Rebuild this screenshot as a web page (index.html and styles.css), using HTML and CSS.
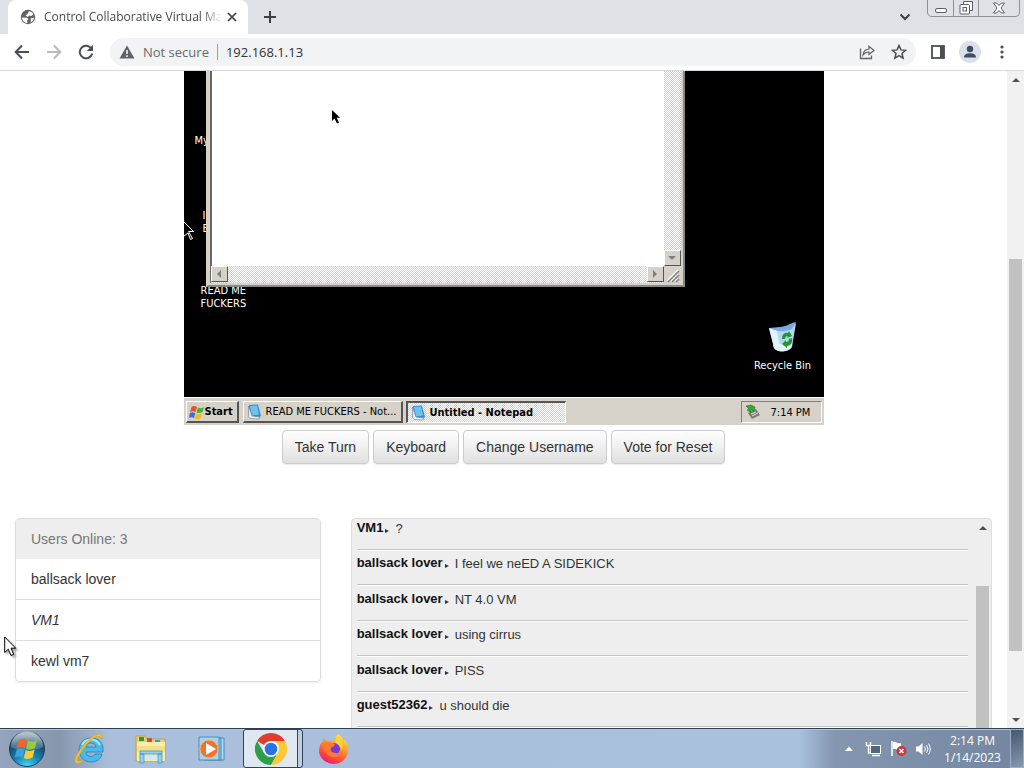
FILE: index.html
```html
<!DOCTYPE html>
<html lang="en">
<head>
    <meta charset="UTF-8">
    <meta name="viewport" content="width=device-width, initial-scale=1.0">
    <title>Control Collaborative Virtual Machines</title>
    <link rel="stylesheet" href="styles.css">
</head>
<body>
    <!-- Browser chrome -->
    <header class="tab-strip">
        <div class="tab">
            <svg class="favicon" width="16" height="16" viewBox="0 0 16 16">
                <circle cx="8" cy="8" r="7.2" fill="#5f6368"/>
                <path d="M2 8.500L7 8.800 8.500 10.500 7 11.500 7.500 14C4.500 14 2.200 11.500 2 8.500zM9 2.200c2 .3 3.500 1.300 4.400 2.800L11.500 7 9 6.500 8 8 5.500 6.500 7.500 5zM14 8.500c-.2 2.500-1.600 4.300-3.600 5L11 11l-.5-1.500z" fill="#fff"/>
            </svg>
            <span class="tab-title">Control Collaborative Virtual Mac</span>
            <button class="icon-btn tab-close" aria-label="Close tab">
                <svg width="10" height="10" viewBox="0 0 10 10"><path d="M1 1l8 8M9 1L1 9" stroke="#3c4043" stroke-width="1.7"/></svg>
            </button>
        </div>
        <button class="icon-btn new-tab" aria-label="New tab">
            <svg width="12" height="12" viewBox="0 0 12 12"><path d="M6 0v12M0 6h12" stroke="#3c4043" stroke-width="2"/></svg>
        </button>
        <button class="icon-btn tab-search" aria-label="Search tabs">
            <svg width="12" height="8" viewBox="0 0 12 8"><path d="M1.5 1.500L6 6l4.500-4.500" fill="none" stroke="#3c4043" stroke-width="2"/></svg>
        </button>
        <div class="window-controls">
            <button aria-label="Minimize"><svg width="14" height="14" viewBox="0 0 14 14"><rect x="1.500" y="7.500" width="11" height="4" rx="1.500" fill="#fff" stroke="#5b6168"/></svg></button>
            <button aria-label="Restore"><svg width="14" height="14" viewBox="0 0 14 14"><path d="M4.500 3.500v-3h9v9h-3" fill="#fff" stroke="#5b6168"/><rect x="1" y="3.500" width="9.500" height="9.500" rx="1" fill="#fff" stroke="#5b6168"/><rect x="4" y="6.500" width="3.500" height="3.500" fill="#fff" stroke="#5b6168"/></svg></button>
            <button class="close" aria-label="Close"><svg width="14" height="12" viewBox="0 0 14 12"><path d="M1.500 1h3.200L7 3.500 9.300 1h3.200L9 6l3.500 5H9.300L7 8.500 4.700 11H1.500L5 6z" fill="#fff" stroke="#5b6168"/></svg></button>
        </div>
    </header>

    <nav class="toolbar">
        <button class="icon-btn" aria-label="Back"><svg width="16" height="16" viewBox="0 0 16 16"><path d="M15 8H2M8 1.500L1.700 8 8 14.500" fill="none" stroke="#4a4d51" stroke-width="2"/></svg></button>
        <button class="icon-btn" aria-label="Forward"><svg width="16" height="16" viewBox="0 0 16 16"><path d="M1 8h13M8 1.500L14.300 8 8 14.500" fill="none" stroke="#b9bbbe" stroke-width="2"/></svg></button>
        <button class="icon-btn" aria-label="Reload"><svg width="16" height="16" viewBox="0 0 16 16"><path d="M13.300 4.500A6.300 6.300 0 1 0 14.200 9.500" fill="none" stroke="#4a4d51" stroke-width="2"/><path d="M15 .8V7H8.800z" fill="#4a4d51"/></svg></button>
        <div class="address">
            <svg width="16" height="14" viewBox="0 0 16 14"><path d="M8 .5L15.500 13.500H.5z" fill="#5f6368"/><path d="M8 5v4M8 10.200v1.800" stroke="#f1f3f4" stroke-width="1.6"/></svg>
            <label class="security" for="url">Not secure</label>
            <input id="url" class="url" type="text" value="192.168.1.13">
            <button class="icon-btn share" aria-label="Share"><svg width="16" height="16" viewBox="0 0 16 16"><path d="M1.500 4.500v10h11v-3" fill="none" stroke="#5f6368" stroke-width="1.3"/><path d="M4 11c.5-4 2.500-5.800 6-6V2.200L15 6.500 10 10.500V8C7.500 8 5.500 9 4 11z" fill="none" stroke="#5f6368" stroke-width="1.2"/></svg></button>
            <button class="icon-btn" aria-label="Bookmark"><svg width="16" height="16" viewBox="0 0 16 16"><path d="M8 1.500l1.900 4.400 4.700.4-3.600 3.100 1.100 4.700L8 11.600l-4.100 2.500L5 9.400 1.400 6.300l4.700-.4z" fill="none" stroke="#4a4d51" stroke-width="1.5"/></svg></button>
        </div>
        <button class="icon-btn" aria-label="Side panel"><svg width="16" height="14" viewBox="0 0 16 14"><rect x="2" y="1" width="12" height="12" fill="none" stroke="#4a4d51" stroke-width="1.8"/><path d="M10 1h4v12h-4z" fill="#4a4d51"/></svg></button>
        <button class="icon-btn profile" aria-label="Profile"><svg width="14" height="14" viewBox="0 0 14 14"><circle cx="7" cy="4" r="3.200" fill="#3f4d63"/><path d="M1 12.500c0-2.800 2.500-4.200 6-4.200s6 1.400 6 4.200z" fill="#3f4d63"/></svg></button>
        <button class="icon-btn" aria-label="Menu"><svg width="4" height="14" viewBox="0 0 4 14"><g fill="#4a4d51"><circle cx="2" cy="2" r="1.600"/><circle cx="2" cy="7" r="1.600"/><circle cx="2" cy="12" r="1.600"/></g></svg></button>
    </nav>

    <div class="viewport">
        <main class="page">
            <section class="vm">
                <div class="vm-desktop">
                    <span class="vm-label my">My</span>
                    <span class="vm-label internet">I<br>E</span>
                    <span class="vm-label readme">READ ME<br>FUCKERS</span>
                    <div class="notepad">
                        <textarea class="notepad-text" aria-label="Untitled - Notepad"></textarea>
                        <div class="xp-scroll vertical"><button aria-label="Scroll down"><i class="arrow down"></i></button></div>
                        <div class="xp-scroll horizontal">
                            <button aria-label="Scroll left"><i class="arrow left"></i></button>
                            <button aria-label="Scroll right"><i class="arrow right"></i></button>
                        </div>
                        <svg class="grip" width="17" height="17" viewBox="0 0 17 17"><path d="M3 15L14 4M7 15l7-7M11 15l3-3" stroke="#fff" stroke-width="1.5"/><path d="M4 16L15 5M8 16l7-7M12 16l3-3" stroke="#808080" stroke-width="1.5"/></svg>
                    </div>
                    <div class="recycle-bin">
                        <svg width="30" height="32" viewBox="0 0 30 32">
                            <path d="M1 7l13 2L28 2l-4 24c-3 5-14 6-18 1z" fill="#b3d8f5"/>
                            <path d="M1 7l11-1c6 0 10-4 16-5l-4 7c-7 3-16 3-23-1z" fill="#7ba9e0"/>
                            <path d="M1 7l8 3 3 17-6-1z" fill="#e2f3fd"/>
                            <path d="M5 24c6-3 10 1 19-1l-1 4c-4 4-14 5-17 0z" fill="#e4f8fb"/>
                            <path d="M14 18c0-5 3-7 6-6l1-2 3 5-5 2 1-2c-2 0-3 1-3 3z" fill="#23962b"/>
                            <path d="M24 17c1 5-2 8-5 8v2l-5-4 4-4v2c2 0 3-1 3-3z" fill="#23962b"/>
                        </svg>
                        <span class="vm-label">Recycle Bin</span>
                    </div>
                    <svg class="cursor-black" width="8" height="14" viewBox="0 0 8 14"><path d="M0 0v11l2.500-2.500L5 13.500l2-1-2.300-4.700H8z"/></svg>
                    <svg class="cursor-outline" width="12" height="20" viewBox="0 0 12 20"><path d="M-1 1l10.500 10.500h-5l4 7-2 1L4 13l-4 3" fill="#000" stroke="#fff"/></svg>
                </div>
                <div class="vm-taskbar">
                    <button class="xp-btn start">
                        <svg width="16" height="16" viewBox="0 0 16 16"><path d="M2.500 3C4.500 1.500 6 2 8 3L6.500 8C5 7 3.500 7 1 8z" fill="#e5532c"/><path d="M9 3.500c2 1 4 1 6-.5l-1.500 5c-2 1.300-4 1.300-6 .5z" fill="#58ab35"/><path d="M.8 9c2-1 3.500-1 5.500 0L5 14c-2-1-3.500-1-5 0z" fill="#3d70d6"/><path d="M7.200 9.500c2 1 4 .8 6-.3l-1.500 5c-2 1.300-4 1.300-6 .3z" fill="#f3be24"/></svg>
                        Start
                    </button>
                    <button class="xp-btn task">
                        <svg width="16" height="16" viewBox="0 0 16 16"><path d="M2 1l9-.5L14 12l-3 2-8-2z" fill="#3a8fd0"/><path d="M3 2l7-.5 2 9-7 1z" fill="#6dc3f0"/><path d="M1.500 2L5 12l8 1-1 2-9-.5-1.500-2z" fill="#e6edf2" stroke="#6f7c88" stroke-width=".6"/></svg>
                        <span>READ ME FUCKERS - Not...</span>
                    </button>
                    <button class="xp-btn task active">
                        <svg width="16" height="16" viewBox="0 0 16 16"><path d="M2 1l9-.5L14 12l-3 2-8-2z" fill="#3a8fd0"/><path d="M3 2l7-.5 2 9-7 1z" fill="#6dc3f0"/><path d="M1.500 2L5 12l8 1-1 2-9-.5-1.500-2z" fill="#e6edf2" stroke="#6f7c88" stroke-width=".6"/></svg>
                        <span>Untitled - Notepad</span>
                    </button>
                    <div class="vm-tray">
                        <svg width="16" height="16" viewBox="0 0 16 16"><path d="M3 9l8-4 4 6-8 4z" fill="#777b78"/><path d="M6 10l5-2M7 12l6-3" stroke="#e3e5e2"/><path d="M1 2l5-1 4 2-1 4-3-1v3L2 6l2-1z" fill="#36a532" stroke="#236d24" stroke-width=".5"/></svg>
                        <span>7:14 PM</span>
                    </div>
                </div>
            </section>

            <div class="actions">
                <button class="btn">Take Turn</button>
                <button class="btn">Keyboard</button>
                <button class="btn">Change Username</button>
                <button class="btn">Vote for Reset</button>
            </div>

            <div class="row">
                <div class="col">
                    <ul class="user-list">
                        <li class="heading">Users Online: 3</li>
                        <li>ballsack lover</li>
                        <li class="self">VM1</li>
                        <li>kewl vm7</li>
                    </ul>
                </div>
                <div class="col">
                    <div class="chat">
                        <div class="messages">
                            <p><b>VM1</b><i></i>?</p>
                            <p><b>ballsack lover</b><i></i>I feel we neED A SIDEKICK</p>
                            <p><b>ballsack lover</b><i></i>NT 4.0 VM</p>
                            <p><b>ballsack lover</b><i></i>using cirrus</p>
                            <p><b>ballsack lover</b><i></i>PISS</p>
                            <p><b>guest52362</b><i></i>u should die</p>
                        </div>
                        <div class="scrollbar chat-scroll">
                            <button aria-label="Scroll up"><i class="arrow up"></i></button>
                            <div class="thumb"></div>
                        </div>
                    </div>
                </div>
            </div>
        </main>
        <div class="scrollbar page-scroll">
            <button aria-label="Scroll up"><i class="arrow up"></i></button>
            <div class="track"><div class="thumb"></div></div>
            <button aria-label="Scroll down"><i class="arrow down"></i></button>
        </div>
    </div>

    <!-- Windows 7 taskbar -->
    <footer class="taskbar">
        <button class="orb" aria-label="Start">
            <svg width="38" height="38" viewBox="0 0 38 38">
                <defs>
                    <radialGradient id="orb" cx=".5" cy="1" r=".95"><stop offset="0" stop-color="#46dcf5"/><stop offset=".4" stop-color="#1683b5"/><stop offset=".75" stop-color="#194b70"/><stop offset="1" stop-color="#5f7b90"/></radialGradient>
                    <linearGradient id="gloss" x1="0" y1="0" x2="0" y2="1"><stop offset="0" stop-color="#fff" stop-opacity=".6"/><stop offset="1" stop-color="#fff" stop-opacity=".15"/></linearGradient>
                </defs>
                <circle cx="19" cy="19" r="17.500" fill="url(#orb)" stroke="#263f55"/>
                <path d="M3 17a16 16 0 0 1 32 0c-9 4-22 5-32 0z" fill="url(#gloss)"/>
                <path d="M11 10c3-2 5-1.500 8 0l-2 8c-3-1.500-5-1.500-8 0z" fill="#f0652a"/>
                <path d="M20 10.500c3 1.500 5.500 1.500 9-.5l-2 8c-3 1.800-6 1.800-9 .5z" fill="#9ac93b"/>
                <path d="M8.700 19.500c3-1.500 5-1.300 8 0l-2 8c-3-1.500-5-1.300-8 0z" fill="#38a3e0"/>
                <path d="M17.700 20c3 1.500 6 1.300 9-.5l-2 8c-3 1.800-6 1.800-9 .5z" fill="#fcc937"/>
            </svg>
        </button>
        <div class="apps">
            <button class="app" aria-label="Internet Explorer">
                <svg width="32" height="32" viewBox="0 0 32 32">
                    <path d="M17 5C9 5 5 11 5 17s5 12 12 12c6 0 10-3 11-8h-7c-1 2-2 2.500-4 2.500-3 0-5-2-5-4.500h17C30 10 25 5 17 5zm-5 9c.5-2.500 2.500-4 5-4s4.500 1.500 5 4z" fill="#48b9ea" stroke="#2180bd" stroke-width=".8"/>
                    <path d="M8 12c2-4 5-5.500 9-5.500s7 2 9 5.500" fill="none" stroke="#a9e7fb" stroke-width="2"/>
                    <path d="M6 21c-4 6-3 8 0 7 1 0 2-1 3-2l-1 3c-3 2-7 2-7-1 0-6 11-21 20-26 5-2 8-1 7 4-2-4-7-3-12 2-4 4-8 9-10 13z" fill="#f2c52e" stroke="#d49a18" stroke-width=".5"/>
                </svg>
            </button>
            <button class="app" aria-label="Windows Explorer">
                <svg width="32" height="32" viewBox="0 0 32 32">
                    <path d="M1 5V3h9l2 3h18v22H1z" fill="#e6cf72" stroke="#b89b45" stroke-width=".8"/>
                    <path d="M4 4h5v4H4z" fill="#2c9a38"/><path d="M12 5h5v4h-5z" fill="#d64b31"/><path d="M20 7h5v3h-5z" fill="#3a9bce"/>
                    <path d="M2 9h28v19H2z" fill="#f9edaa"/><path d="M2 13h28v6H2z" fill="#f3df8a"/>
                    <path d="M5 18h22v3H5zM5 21h4v9H5zM23 21h4v9h-4z" fill="#94d0ec" stroke="#4495c4" stroke-width=".8"/>
                    <path d="M10 22h12v5H10z" fill="#cdeafa"/>
                </svg>
            </button>
            <button class="app" aria-label="Media Player">
                <svg width="32" height="32" viewBox="0 0 32 32">
                    <path d="M12 5h16v22H12z" fill="#b4d9ee" stroke="#4589b5"/><path d="M8 5h17v22H8z" fill="#8ec8ec" stroke="#4589b5"/><path d="M3 4h20v23H3z" fill="#a5d4ef" stroke="#4a8fbc"/>
                    <circle cx="13" cy="16" r="9" fill="#ed742a" stroke="#f7b580"/><path d="M10 10l10 6-10 6z" fill="#fff"/>
                </svg>
            </button>
            <button class="app running" aria-label="Google Chrome">
                <svg width="32" height="32" viewBox="0 0 48 48">
                    <path d="M24 24L3.200 12A24 24 0 0 1 44.800 12H24z" fill="#e33b2e"/>
                    <path d="M24 48A24 24 0 0 1 3.200 12L13.600 30 24 36 34.400 30z" fill="#2d9f4b"/>
                    <path d="M24 12h20.800A24 24 0 0 1 24 48l10.400-18z" fill="#fcc934"/>
                    <circle cx="24" cy="24" r="12" fill="#fff"/><circle cx="24" cy="24" r="9.500" fill="#2874e6"/>
                </svg>
            </button>
            <button class="app" aria-label="Firefox">
                <svg width="32" height="32" viewBox="0 0 32 32">
                    <defs><linearGradient id="fox" x1=".8" y1="0" x2=".3" y2="1"><stop offset="0" stop-color="#fff04a"/><stop offset=".4" stop-color="#ff9a26"/><stop offset=".75" stop-color="#ff4742"/><stop offset="1" stop-color="#e8186c"/></linearGradient></defs>
                    <path d="M20 1c3 2 5 4 6 7l1-1c3 4 4 8 3 12-1 7-7 12-14 12S2 26 1 19c0-5 1-8 4-11V5l4 3c3 0 6 0 8-1 0-3 1-5 3-6z" fill="url(#fox)"/>
                    <circle cx="16" cy="16" r="6" fill="#743ae0"/>
                    <path d="M5 12c2-3 6-4 9-2l3 1c0 2-3 3-4 4s0 5 4 5c4 1 5-2 8-1-2 4-6 6-11 5S5 18 5 12z" fill="#ff7b2b"/>
                    <path d="M20 3c4 4 6 9 4 15-1-4-3-6-6-8-1-3 0-5 2-7z" fill="#ffd43a"/>
                </svg>
            </button>
        </div>
        <div class="tray">
            <svg width="10" height="6" viewBox="0 0 10 6"><path d="M5 .5L9 5H1z" fill="#fff"/></svg>
            <svg width="17" height="16" viewBox="0 0 17 16"><rect x="5.500" y="4.500" width="10" height="8" fill="#53667f" stroke="#fff"/><path d="M7 14.500h8" stroke="#fff" stroke-width="1.5"/><path d="M1.500 1v3.500h4V1M3.500 4.500V12H6" fill="none" stroke="#fff" stroke-width="1.4"/></svg>
            <svg width="17" height="17" viewBox="0 0 17 17"><path d="M2 1v15" stroke="#fff" stroke-width="1.5"/><path d="M3 2c3-1 4 2 8 1v7c-4 1-5-2-8-1z" fill="#fff"/><circle cx="11.500" cy="11" r="5" fill="#d1343a"/><path d="M9.500 9l4 4M13.500 9l-4 4" stroke="#fff" stroke-width="1.5"/></svg>
            <svg width="16" height="16" viewBox="0 0 16 16"><path d="M1 5.500h2.500L7.500 2v12L3.500 10.500H1z" fill="#fff"/><path d="M9.500 5.500q2 2.500 0 5M11.500 4q3 4 0 8M13.500 2.500q3.500 5.500 0 11" fill="none" stroke="#fff"/></svg>
        </div>
        <div class="clock">2:14 PM<br>1/14/2023</div>
        <button class="show-desktop" aria-label="Show desktop"></button>
    </footer>

    <svg class="cursor" width="14" height="21" viewBox="0 0 14 21"><path d="M.7 1v15.500l3.600-3.300L7 19.500l2.700-1.200L7 12.200h4.800z" fill="#fff" stroke="#000"/></svg>
</body>
</html>
```
FILE: styles.css
```css
:root {
    --ui-font: "Open Sans", "Segoe UI", sans-serif;
    --page-font: "Liberation Sans", Arial, sans-serif;
    --xp-font: "DejaVu Sans Condensed", Tahoma, sans-serif;
    --chrome-bg: #dee1e6;
    --xp-face: #d6d2ca;
    --border: #ddd;
    --well: #eee;
}

* {
    box-sizing: border-box;
}

body {
    margin: 0;
    height: 100vh;
    display: flex;
    flex-direction: column;
    overflow: hidden;
    background: #fff;
    font-family: var(--page-font);
    font-size: 14px;
    line-height: 20px;
    color: #333;
}

button {
    font: inherit;
    color: inherit;
    padding: 0;
    border: none;
    background: none;
}

svg {
    display: block;
    flex: none;
}

/* Tab strip */
.tab-strip {
    display: flex;
    flex: none;
    height: 34px;
    background: var(--chrome-bg);
    padding-left: 8px;
    font-family: var(--ui-font);
}

.tab {
    display: flex;
    align-items: center;
    width: 240px;
    padding: 0 10px 0 12px;
    background: #fff;
    border-radius: 8px 8px 0 0;
}

.tab-title {
    flex: 1;
    margin: 0 0 0 8px;
    overflow: hidden;
    white-space: nowrap;
    font-size: 12px;
    color: #45494d;
    -webkit-mask-image: linear-gradient(to left, transparent 4px, #000 24px);
    mask-image: linear-gradient(to left, transparent 4px, #000 24px);
}

.icon-btn {
    display: flex;
    flex: none;
    align-items: center;
    justify-content: center;
}

.tab-close {
    width: 12px;
}

.new-tab {
    width: 44px;
}

.tab-search {
    margin-left: auto;
    width: 44px;
}

.window-controls {
    display: flex;
    height: 17px;
    margin: 0 4px 0 0;
    border: 1px solid #8b9198;
    border-top: none;
    border-radius: 0 0 5px 5px;
}

.window-controls button {
    display: flex;
    align-items: center;
    justify-content: center;
    width: 25px;
}

.window-controls button + button {
    border-left: 1px solid #8b9198;
}

.window-controls .close {
    width: 41px;
}

/* Toolbar */
.toolbar {
    display: flex;
    flex: none;
    align-items: center;
    gap: 16px;
    height: 37px;
    padding: 0 20px 0 14px;
    border-bottom: 1px solid #d5d7da;
}

.address {
    display: flex;
    flex: 1;
    align-items: center;
    height: 28px;
    margin-right: -2px;
    padding: 0 9px;
    border-radius: 14px;
    background: #f1f3f4;
    font-family: var(--ui-font);
    font-size: 13px;
}

.security {
    margin: 0 8px;
    color: #666a6e;
}

.url {
    flex: 1;
    min-width: 0;
    height: 16px;
    padding: 0 8px;
    border: none;
    border-left: 1px solid #9b9ea2;
    background: none;
    font: inherit;
    color: #303235;
}

.share {
    margin-right: 16px;
}

.profile {
    width: 22px;
    height: 22px;
    margin-left: -3px;
    margin-right: 3px;
    border-radius: 50%;
    background: #dadfe9;
}

/* Web page */
.viewport {
    display: flex;
    flex: 1;
    min-height: 0;
}

.page {
    flex: 1;
    overflow: hidden;
}

.scrollbar {
    display: flex;
    flex-direction: column;
    width: 17px;
    background: #f1f1f1;
}

.scrollbar button {
    display: flex;
    flex: none;
    align-items: center;
    justify-content: center;
    height: 17px;
}

.thumb {
    background: #c1c1c1;
}

.page-scroll .track {
    flex: 1;
    display: grid;
    grid-template-rows: 171fr 392fr 60fr;
}

.page-scroll .thumb {
    grid-row: 2;
    margin: 0 2px;
}

.arrow {
    border: 4px solid transparent;
}

.arrow.up {
    border-top-width: 0;
    border-bottom-color: #505050;
}

.arrow.down {
    border-bottom-width: 0;
    border-top-color: #505050;
}

.arrow.left {
    border-left-width: 0;
    border-right-color: #808080;
}

.arrow.right {
    border-right-width: 0;
    border-left-color: #808080;
}

/* Remote machine */
.vm {
    width: 640px;
    margin: 0 auto;
    font-family: var(--xp-font);
    font-size: 11px;
    line-height: 13px;
    color: #000;
}

.vm-desktop {
    position: relative;
    height: 326px;
    overflow: hidden;
    background: #000;
}

.vm-label {
    color: #fff;
}

.vm-desktop > .vm-label {
    position: absolute;
}

.my {
    left: 11px;
    top: 63px;
}

.internet {
    left: 19px;
    top: 138px;
}

.readme {
    left: 17px;
    top: 213px;
}

.notepad {
    position: absolute;
    left: 22px;
    top: 0;
    width: 479px;
    height: 216px;
    display: grid;
    grid-template-columns: 1fr 17px;
    grid-template-rows: 1fr 17px;
    padding: 0 2px 2px 2px;
    border: 2px solid var(--xp-face);
    border-top: none;
    border-right-color: #8b8985;
    border-bottom-color: #8b8985;
    background: var(--xp-face);
}

.notepad-text {
    width: 100%;
    height: 100%;
    padding: 4px;
    border: none;
    border-left: 2px solid #6b6965;
    background: #fff;
    resize: none;
}

.xp-scroll {
    display: flex;
    background: repeating-conic-gradient(#fff 0 25%, var(--xp-face) 0 50%) 0 0 / 2px 2px;
}

.xp-scroll button {
    display: flex;
    align-items: center;
    justify-content: center;
    width: 17px;
    height: 16px;
    background: var(--xp-face);
    border: 1px solid #fff;
    border-right-color: #555;
    border-bottom-color: #555;
}

.xp-scroll .arrow.down {
    border-top-color: #808080;
}

.xp-scroll.vertical {
    align-items: flex-end;
}

.xp-scroll.horizontal {
    justify-content: space-between;
    border-left: 1px solid #6b6965;
}

.recycle-bin {
    position: absolute;
    right: 6px;
    bottom: 25px;
    display: flex;
    flex-direction: column;
    align-items: center;
    gap: 6px;
    width: 70px;
    white-space: nowrap;
}

.cursor-black {
    position: absolute;
    left: 148px;
    top: 39px;
}

.cursor-outline {
    position: absolute;
    left: 0;
    top: 149px;
}

.vm-taskbar {
    display: flex;
    gap: 3px;
    height: 28px;
    padding: 3px 2px 2px;
    border-top: 1px solid #fff;
    background: var(--xp-face);
}

.xp-btn {
    display: flex;
    align-items: center;
    gap: 3px;
    padding: 0 0 0 3px;
    border: 1px solid #fff;
    border-right: 2px solid #555;
    border-bottom: 2px solid #555;
    white-space: nowrap;
}

.xp-btn.start {
    width: 53px;
    gap: 0;
    margin-right: 1px;
    padding-left: 2px;
    font-weight: bold;
}

.xp-btn.task {
    width: 160px;
}

.xp-btn.active {
    font-weight: bold;
    border: 1px solid #fff;
    border-top: 2px solid #555;
    border-left: 2px solid #555;
    background: repeating-conic-gradient(#fff 0 25%, var(--xp-face) 0 50%) 0 0 / 2px 2px;
}

.vm-tray {
    display: flex;
    align-items: center;
    gap: 10px;
    width: 81px;
    margin-left: auto;
    padding: 0 3px;
    border: 1px solid #808080;
    border-right-color: #fff;
    border-bottom-color: #fff;
}

.actions {
    display: flex;
    justify-content: center;
    gap: 4px;
    padding: 5px 0 54px;
}

.btn {
    height: 34px;
    padding: 0 12px;
    border: 1px solid #ccc;
    border-radius: 4px;
    background: linear-gradient(#fff, #e0e0e0);
    box-shadow: 0 1px 1px rgba(0, 0, 0, 0.08);
}

.row {
    display: grid;
    grid-template-columns: 1fr 2fr;
}

.col {
    padding: 0 15px;
}

.user-list {
    margin: 0;
    padding: 0;
    list-style: none;
    border: 1px solid var(--border);
    border-radius: 4px;
    box-shadow: 0 1px 2px rgba(0, 0, 0, 0.08);
}

.user-list li {
    padding: 10px 15px;
}

.user-list li + li {
    border-top: 1px solid var(--border);
}

.user-list .heading {
    background: var(--well);
    color: #777;
}

.user-list .heading + li {
    border-top: none;
}

.user-list .self {
    font-style: italic;
}

.chat {
    display: flex;
    height: 300px;
    overflow: hidden;
    border: 1px solid var(--border);
    border-radius: 4px;
    background: var(--well);
}

.messages {
    flex: 1;
    display: grid;
    grid-template-rows: 32px;
    grid-auto-rows: 35px 36px;
    align-content: start;
    padding: 0 6px 0 5px;
    font-size: 13px;
}

.messages p {
    display: flex;
    align-items: flex-end;
    margin: 0;
    padding-bottom: 11px;
    border-bottom: 1px solid #fff;
    box-shadow: inset 0 -1px #c4c4c4;
}

.messages b {
    padding-bottom: 1px;
    color: #111;
}

.messages i {
    margin: 0 6px 6px 2px;
    border: 2px solid transparent;
    border-left: 4px solid #333;
    border-right-width: 0;
}

.chat-scroll {
    background: var(--well);
}

.chat-scroll .thumb {
    flex: 1;
    margin: 50px 2px 0;
}

/* Taskbar */
.taskbar {
    display: flex;
    flex: none;
    align-items: stretch;
    height: 40px;
    border-top: 1px solid #2d3d54;
    background: linear-gradient(90deg, #95a5bd 0, #8797ae 60px, #a9bfdb 110px, #a9c1dd calc(100% - 225px), #8496b0 calc(100% - 190px), #74869f 100%);
    box-shadow: inset 0 1px #b9c7da;
}

.orb {
    display: flex;
    align-items: center;
    padding: 0 8px;
}

.apps {
    display: flex;
    gap: 1px;
    margin-left: 6px;
}

.app {
    display: flex;
    align-items: center;
    justify-content: center;
    width: 60px;
}

.app.running {
    padding-right: 5px;
    border: 1px solid #33425a;
    border-radius: 3px;
    background: linear-gradient(90deg, #dfe7f1 53px, #33425a 53px 54px, #c0cddf 54px);
}

.tray {
    display: flex;
    align-items: center;
    gap: 8px;
    margin-left: auto;
}

.tray svg:first-child {
    margin-right: 3px;
}

.clock {
    width: 83px;
    padding: 3px 0 0;
    text-align: center;
    font-family: var(--ui-font);
    font-size: 12px;
    line-height: 17px;
    color: #fff;
}

.show-desktop {
    width: 14px;
    margin-left: -4px;
    border: 1px solid #9eb0c8;
    background: linear-gradient(160deg, #47586f, #8597ae);
}

.cursor {
    position: absolute;
    left: 4px;
    top: 636px;
    filter: drop-shadow(2px 2px 1px rgba(0, 0, 0, 0.35));
}
```
